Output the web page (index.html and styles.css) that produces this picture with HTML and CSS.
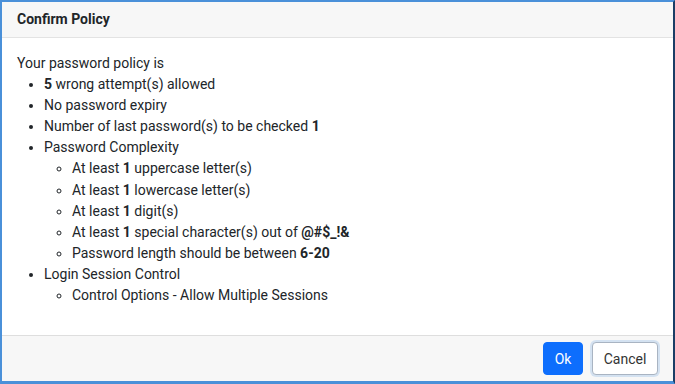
FILE: index.html
```html
<!DOCTYPE html>
<html lang="en">
<head>
  <meta charset="UTF-8">
  <title>Confirm Policy</title>
  <link rel="stylesheet" href="styles.css">
</head>
<body>
  <div class="modal">
    <div class="modal-header">Confirm Policy</div>
    <div class="modal-body">
      <div>Your password policy is</div>
      <ul>
        <li><b>5</b> wrong attempt(s) allowed</li>
        <li>No password expiry</li>
        <li>Number of last password(s) to be checked <b>1</b></li>
        <li>Password Complexity
          <ul>
            <li>At least <b>1</b> uppercase letter(s)</li>
            <li>At least <b>1</b> lowercase letter(s)</li>
            <li>At least <b>1</b> digit(s)</li>
            <li>At least <b>1</b> special character(s) out of <b>@#$_!&amp;</b></li>
            <li>Password length should be between <b>6-20</b></li>
          </ul>
        </li>
        <li>Login Session Control
          <ul>
            <li>Control Options - Allow Multiple Sessions</li>
          </ul>
        </li>
      </ul>
    </div>
    <div class="modal-footer">
      <button class="btn btn-primary">Ok</button>
      <button class="btn btn-default">Cancel</button>
    </div>
  </div>
</body>
</html>
```

FILE: styles.css
```css
html, body { margin: 0; height: 100%; }
body { font-family: Roboto, "Liberation Sans", sans-serif; font-size: 14px; color: #212529; background: #fff; }
.modal { box-sizing: border-box; height: 384px; width: 675px; display: flex; flex-direction: column; border: 2px solid #4a90d9; border-right: 2px solid #1b3e66; border-bottom-width: 3px; }
.modal-header { height: 35px; line-height: 34px; padding: 0 15px; font-weight: bold; font-size: 14px; background: #f7f7f7; border-bottom: 1px solid #e3e3e3; }
.modal-body { flex: 1; padding: 15px 15px 0; line-height: 21.1px; }
.modal-body ul { margin: 0; padding-left: 27px; }
.modal-body ul ul { padding-left: 28px; list-style: circle; }
.modal-body b { font-weight: bold; }
.modal-footer { height: 45px; display: flex; justify-content: flex-end; align-items: center; gap: 9px; padding: 0 15px; background: #f7f7f7; border-top: 1px solid #dedede; }
.btn { font-family: inherit; font-size: 14px; height: 33px; padding: 0 10px; border-radius: 4px; cursor: pointer; }
.btn-primary { background: #0d6efd; color: #fff; border: 1px solid #0d6efd; width: 40px; }
.btn-default { background: #fff; color: #333; border: 1px solid #a9b4c2; width: 66px; box-shadow: 0 0 0 2px #d4e2f1; }
```
